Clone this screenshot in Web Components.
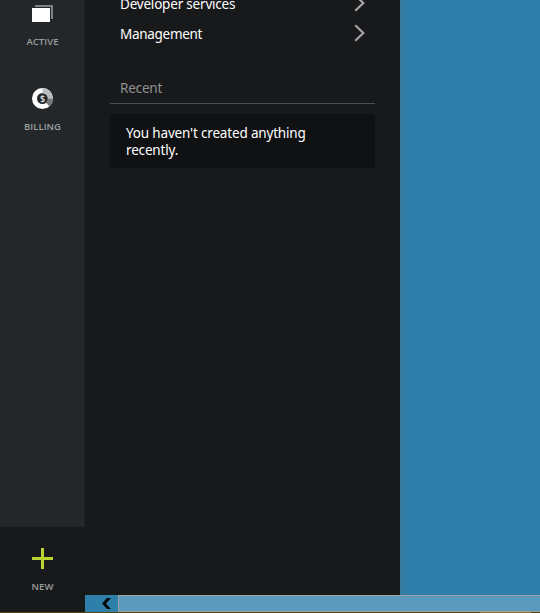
<!DOCTYPE html>
<html lang="en"><head><meta charset="utf-8"><title>Portal</title>
<style>html,body{margin:0;height:613px;overflow:hidden;background:#2e80ab}</style></head>
<body><portal-page></portal-page>
<script>
const define=(name,markup)=>{
  const t=document.createElement('template');t.innerHTML=markup;
  customElements.define(name,class extends HTMLElement{
    constructor(){super();this.attachShadow({mode:'open'}).append(t.content.cloneNode(true));}
  });
};
define('nav-tile',`<style>
:host{display:flex;flex-direction:column;align-items:center;box-sizing:border-box;width:85px;color:#9b9d9e;font:600 9.5px/14px "Open Sans","Noto Sans",sans-serif;letter-spacing:var(--track,0)}
::slotted(svg){display:block;margin-bottom:var(--gap,14px)}
</style><slot name="icon"></slot><span><slot></slot></span>`);
define('side-bar',`<style>
:host{display:flex;flex-direction:column;width:85px;height:612px;background:linear-gradient(90deg,#23272a 0 84px,#202426 84px)}
.active{height:83px;margin-top:5px;--gap:12px;--track:.05px}
.billing{--gap:11px;--track:.02px}
.new{margin-top:auto;height:85px;padding-top:21px;background:#18191b;--gap:11px;--track:.1px}
</style>
<nav-tile class="active"><svg slot="icon" width="21" height="18"><path d="M3 0H21V14H19V2H3Z" fill="#818385"/><path d="M0 3H18V17H0Z" fill="#fff"/></svg>ACTIVE</nav-tile>
<nav-tile class="billing"><svg slot="icon" width="21" height="21" viewBox="0 0 21 21"><circle cx="10.5" cy="10.5" r="8" fill="none" stroke="#fff" stroke-width="5"/><path d="M10.5 0A10.5 10.5 0 0 1 21 10.5H15.8A5.3 5.3 0 0 0 10.5 5.2Z" fill="#b8babb"/><path d="M21 10.5A10.5 10.5 0 0 1 17.4 18.4L14 14.5A5.3 5.3 0 0 0 15.8 10.5Z" fill="#737678"/><text x="10.5" y="13.8" text-anchor="middle" font-family="Open Sans,sans-serif" font-size="9" font-weight="600" letter-spacing="0" fill="#e4e5e5">$</text></svg>BILLING</nav-tile>
<nav-tile class="new"><svg slot="icon" width="21" height="21"><path d="M9 0H12V9H21V12H12V21H9V12H0V9H9Z" fill="#bad532"/></svg>NEW</nav-tile>`);
define('menu-row',`<style>
:host{display:flex;align-items:center;justify-content:space-between;height:30px;padding:0 9px 0 10px;color:#fff;letter-spacing:var(--track,0)}
svg{display:block;margin-top:-2px}
</style><span><slot></slot></span><svg width="12" height="18"><path d="M1.3 1.3L9.3 9L1.3 16.7" fill="none" stroke="#a5a6a7" stroke-width="2.2"/></svg>`);
define('create-blade',`<style>
:host{display:block;box-sizing:border-box;width:315px;padding:0 25px;background:#18191b;font:13.5px/17px "Noto Sans","Open Sans",sans-serif;color:#fff}
nav{margin-top:-11px}
.services{--track:-.2px}.management{--track:-.29px}
h2{box-sizing:border-box;height:25px;margin:30px 0 10px;padding-left:10px;border-bottom:1px solid #4c4d4f;color:#909192;font:inherit;line-height:19px;letter-spacing:-.2px}
p{box-sizing:border-box;height:54px;margin:0;padding:11px 16px 0;background:#101113;letter-spacing:-.17px}
</style>
<nav><menu-row class="services">Developer services</menu-row><menu-row class="management">Management</menu-row></nav>
<h2>Recent</h2><p>You haven't created anything<br>recently.</p>`);
define('scroll-strip',`<style>
:host{display:flex;height:17px;background:#2e80ab}
.arrow{width:33px;display:flex;align-items:center;justify-content:center}
svg{margin-left:11px;display:block}
.thumb{flex:1;box-sizing:border-box;border:1px solid #a2a1a2;border-right:0;background:#5b99bd}
</style><div class="arrow"><svg width="10" height="11"><path d="M5 0H9L4 5.5L9 11H5L0 5.5Z" fill="#05080a"/></svg></div><div class="thumb"></div>`);
define('portal-page',`<style>
:host{display:block;width:540px;height:613px;overflow:hidden}
.main{display:grid;grid-template:595px 17px/315px 140px}
.shell{display:flex;height:612px}
.canvas{background:linear-gradient(90deg,#377da3 0 5px,#2e80ab 5px)}
scroll-strip{grid-column:1/3}
footer{height:1px;background:linear-gradient(90deg,#594511 0 480px,#98732b 480px 531px,#59430e 531px)}
</style>
<div class="shell"><side-bar></side-bar><div class="main"><create-blade></create-blade><div class="canvas"></div><scroll-strip></scroll-strip></div></div><footer></footer>`);
</script></body></html>
